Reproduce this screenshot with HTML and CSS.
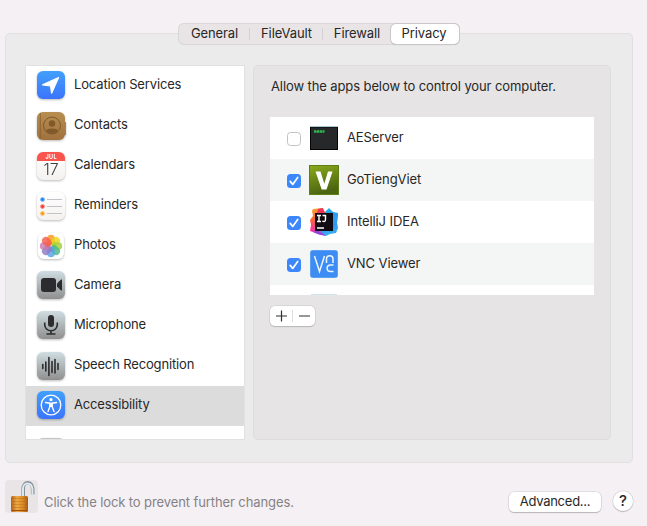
FILE: index.html
```html
<!DOCTYPE html>
<html lang="en">
<head>
<meta charset="utf-8">
<title>Security &amp; Privacy</title>
<link rel="stylesheet" href="styles.css">
</head>
<body>
<svg class="defs" width="0" height="0" aria-hidden="true">
  <defs>
    <linearGradient id="blue" x2="0" y2="1"><stop stop-color="#42a0fb"/><stop offset="1" stop-color="#3b74fb"/></linearGradient>
    <linearGradient id="brown" x2="0" y2="1"><stop stop-color="#b78e50"/><stop offset="1" stop-color="#a0713e"/></linearGradient>
    <linearGradient id="gray" x2="0" y2="1"><stop stop-color="#cfdde2"/><stop offset="1" stop-color="#908f8e"/></linearGradient>
    <linearGradient id="paper" x2="0" y2="1"><stop stop-color="#fff"/><stop offset="1" stop-color="#f4f2f0"/></linearGradient>
    <linearGradient id="green" x2="0.3" y2="1"><stop stop-color="#8aaa1c"/><stop offset="1" stop-color="#4b6410"/></linearGradient>
    <linearGradient id="gold" x2="1" y2="0"><stop stop-color="#b5611b"/><stop offset=".35" stop-color="#f0aa43"/><stop offset=".7" stop-color="#dc8a25"/><stop offset="1" stop-color="#a85a12"/></linearGradient>
    <linearGradient id="warm" x2=".3" y2="1"><stop stop-color="#fbb42c"/><stop offset=".4" stop-color="#fb6a36"/><stop offset=".75" stop-color="#f7379b"/><stop offset="1" stop-color="#b43fd0"/></linearGradient>
    <linearGradient id="cool" x2=".2" y2="1"><stop stop-color="#25c3ee"/><stop offset=".5" stop-color="#2384ee"/><stop offset="1" stop-color="#3aaef2"/></linearGradient>
  </defs>
</svg>
<main class="window">
  <section class="panel">
    <nav class="tabs">
      <span class="tab general">General</span>
      <span class="tab filevault">FileVault</span>
      <span class="tab firewall">Firewall</span>
      <span class="tab privacy active">Privacy</span>
    </nav>
    <div class="columns">
      <ul class="services">
        <li><svg class="icon" viewBox="0 0 28 28"><rect width="28" height="28" rx="6" fill="url(#blue)"/><path d="M5.600 13.800 21.600 6.500 14.600 22.200 13.500 15Z" fill="#fff" stroke="#fff" stroke-width="1.200" stroke-linejoin="round"/></svg><span>Location Services</span></li>
        <li class="low"><svg class="icon" viewBox="0 0 28 28"><path d="M27 10h2v5h-2z" fill="#3c9cdd"/><path d="M27 15h2v4h-2z" fill="#ef6a29"/><path d="M27 19h2v4h-2z" fill="#45b552"/><rect width="28" height="28" rx="6" fill="url(#brown)"/><path d="M3.300 1v26" stroke="#85602e" stroke-width=".8"/><circle cx="15" cy="13.600" r="8.500" fill="none" stroke="#80592a"/><circle cx="15" cy="11.500" r="3.200" fill="#80592a"/><path d="M9 19c1-3.200 11-3.200 12 0-3 3.500-9 3.500-12 0Z" fill="#80592a"/></svg><span>Contacts</span></li>
        <li class="low"><svg class="icon" viewBox="0 0 28 28"><rect width="28" height="28" rx="6" fill="url(#paper)"/><path d="M0 9V6a6 6 0 0 1 6-6h16a6 6 0 0 1 6 6v3Z" fill="#f9544d"/><text class="cal-month" x="14.200" y="7.100">JUL</text><text class="cal-day" x="14" y="23">17</text></svg><span>Calendars</span></li>
        <li class="low"><svg class="icon" viewBox="0 0 28 28"><rect width="28" height="28" rx="6" fill="url(#paper)"/><path d="M10 7.500h15M10 14.500h15M10 21.500h15" stroke="#c3c2c8"/><g stroke-width="1"><circle cx="5.500" cy="7.500" r="2" fill="#2482fc" stroke="#8cbcfa"/><circle cx="5.500" cy="14.500" r="2" fill="#f53d38" stroke="#f99b96"/><circle cx="5.500" cy="21.500" r="2" fill="#fc9b13" stroke="#fbcb82"/></g></svg><span>Reminders</span></li>
        <li class="low"><svg class="icon" viewBox="0 0 28 28"><rect x="1" y="1" width="26" height="26" rx="6" fill="#fff"/><g class="petals" transform="translate(14 14)"><rect x="-3.800" y="-11.200" width="7.600" height="10.600" rx="3.800" fill="#fb9a18"/><rect x="-3.800" y="-11.200" width="7.600" height="10.600" rx="3.800" fill="#ead51b" transform="rotate(45)"/><rect x="-3.800" y="-11.200" width="7.600" height="10.600" rx="3.800" fill="#a3cf39" transform="rotate(90)"/><rect x="-3.800" y="-11.200" width="7.600" height="10.600" rx="3.800" fill="#49b982" transform="rotate(135)"/><rect x="-3.800" y="-11.200" width="7.600" height="10.600" rx="3.800" fill="#55a4e4" transform="rotate(180)"/><rect x="-3.800" y="-11.200" width="7.600" height="10.600" rx="3.800" fill="#8b79c5" transform="rotate(225)"/><rect x="-3.800" y="-11.200" width="7.600" height="10.600" rx="3.800" fill="#c979b0" transform="rotate(270)"/><rect x="-3.800" y="-11.200" width="7.600" height="10.600" rx="3.800" fill="#f65b48" transform="rotate(315)"/></g></svg><span>Photos</span></li>
        <li><svg class="icon" viewBox="0 0 28 28"><rect width="28" height="28" rx="6" fill="url(#gray)"/><rect x="4" y="7" width="15" height="14" rx="3" fill="#2c2c2e"/><path d="M20 12.500 24 8.500h1v11h-1l-4-4Z" fill="#2c2c2e"/></svg><span>Camera</span></li>
        <li><svg class="icon" viewBox="0 0 28 28"><rect width="28" height="28" rx="6" fill="url(#gray)"/><rect x="11" y="4" width="6" height="12" rx="3" fill="#2c2c2e"/><path d="M7.700 11.500v2a6.300 6.300 0 0 0 12.600 0v-2M14 19.500v3.500M9.500 23h9" fill="none" stroke="#2c2c2e" stroke-width="1.600"/></svg><span>Microphone</span></li>
        <li class="low"><svg class="icon" viewBox="0 0 28 28"><rect width="28" height="28" rx="6" fill="url(#gray)"/><path d="M5.800 12.500v4M8.800 10v9M11.900 5.500v18M15 9.500v11M18 7.500v13.500M21 11.500v6" stroke="#2c2c2e" stroke-width="1.600" stroke-linecap="round"/></svg><span>Speech Recognition</span></li>
        <li class="selected"><svg class="icon" viewBox="0 0 28 28"><rect width="28" height="28" rx="6" fill="url(#blue)"/><circle cx="14" cy="14" r="9.800" fill="none" stroke="#fff" stroke-width="1.300"/><circle cx="14" cy="8.700" r="1.600" fill="#fff"/><path d="M8.500 11.500 13 12.200v3l-2 5.300M19.500 11.500 15 12.200v3l2 5.300" fill="none" stroke="#fff" stroke-width="1.400" stroke-linecap="round"/><path d="M12.300 11.900h3.400v4h-3.400z" fill="#fff"/></svg><span>Accessibility</span></li>
        <li class="partial"><svg class="icon" viewBox="0 0 28 28"><rect width="28" height="28" rx="6" fill="#c5c5c5"/></svg></li>
      </ul>
      <section class="detail">
        <p>Allow the apps below to control your computer.</p>
        <ul class="apps">
          <li><i class="check"></i><svg class="app-icon" viewBox="0 0 30 30"><rect x="1.500" y="4" width="27" height="22.500" fill="#272829" stroke="#050505"/><path d="M1 3.500h28" stroke="#a9c7d5"/><path d="M5 8.500h10.500" stroke="#2fb84f" stroke-width="2.400" stroke-dasharray="2.400 .4"/></svg><span>AEServer</span></li>
          <li><i class="check on"><svg viewBox="0 0 14 14"><path d="m3.200 7.400 2.500 3 5-7"/></svg></i><svg class="app-icon" viewBox="0 0 30 30"><rect x=".5" y=".5" width="29" height="29" fill="url(#green)" stroke="#617d15"/><path d="M6.500 6.500h5l3.800 12.200 3.700-12.200h4.500L17.500 24.500h-4.800Z" fill="#fff"/></svg><span>GoTiengViet</span></li>
          <li><i class="check on"><svg viewBox="0 0 14 14"><path d="m3.200 7.400 2.500 3 5-7"/></svg></i><svg class="app-icon" viewBox="0 0 30 30"><path d="M16 5 20 1l4 4 5 1-1 10 1 5-2 5-6 1-4 2-6-4Z" fill="url(#cool)"/><path d="m22 6 7 0-1 9-4 3Z" fill="#2f9df0"/><path d="m4 2 9-1 4 5-6 18 6 5-8-2-8-3 1-6-1-5 3-4-1-5Z" fill="url(#warm)"/><path d="m9 2 5-1 2 6H8Z" fill="#ea3560"/><path d="m7 23 10 6-7-1.500-5-2Z" fill="#8c48dc"/><path d="M6 6h18v18H6z" fill="#110c13"/><path d="M8 8.500h4M10 8.500v6M8 14.500h4M13.500 8.500h3v4.200c0 2-1.500 2-3.200 1.500M8 21h7" fill="none" stroke="#fff" stroke-width="1.400"/></svg><span>IntelliJ IDEA</span></li>
          <li><i class="check on"><svg viewBox="0 0 14 14"><path d="m3.200 7.400 2.500 3 5-7"/></svg></i><svg class="app-icon" viewBox="0 0 30 30"><rect x="1.500" y="1.500" width="27" height="27" rx="2" fill="#3c8cf3" stroke="#5da0f1"/><path d="m5.500 7 5 15.500L15.500 7M17.500 14V10c0-4.500 6.500-4.500 6.500 0v4M24.500 16h-3c-4.500 0-4.500 6.500 0 6.500h3" fill="none" stroke="#e9f4ff" stroke-width="1.500"/></svg><span>VNC Viewer</span></li>
          <li class="next"><i></i></li>
        </ul>
        <div class="add-remove"><svg viewBox="0 0 46 20"><path d="M6 10h11M11.500 4.500v11M29 10h11" stroke="#303030" stroke-width="1.200"/><path d="M22.500 4v12" stroke="#ddd"/></svg></div>
      </section>
    </div>
  </section>
  <footer>
    <div class="lock"><svg viewBox="0 0 33 33"><path d="M18.200 17V8.500c0-8 9-8 9.500 0V14" fill="none" stroke="#84929b" stroke-width="3.600" transform="translate(0 .3)"/><path d="M18 17V8.500c0-7 8.500-7 9.400 0V14" fill="none" stroke="#e1ebf0" stroke-width="1.900" transform="translate(0 .3)"/><rect x="6" y="16" width="17" height="16" rx="1.500" fill="url(#gold)"/><path d="M6 18.500h17M6 21.500h17M6 24.500h17M6 27.500h17" stroke="#a76517" stroke-width=".4"/><path d="M6.500 30.500h16" stroke="#985113"/></svg></div>
    <span class="lock-text">Click the lock to prevent further changes.</span>
    <button class="advanced">Advanced...</button>
    <button class="help">?</button>
  </footer>
</main>
</body>
</html>
```
FILE: styles.css
```css
* { box-sizing: border-box; }
body { margin: 0; background: #f5f0f4; color: #272727; font: 13px/16px Inter, "Liberation Sans", sans-serif; letter-spacing: -.1px; }
ul, p { margin: 0; padding: 0; list-style: none; }
.defs { display: block; height: 0; }
.window { width: 647px; height: 526px; padding: 33px 14px 0 5px; overflow: hidden; }
.panel { height: 430px; border: 1px solid #e2dfe2; border-radius: 5px; background: #ecebec; }
.tabs { display: flex; width: 282px; height: 22px; margin: -11px 0 0 172px; border-radius: 6px; background: #e9e5e7; box-shadow: inset 0 0 0 1px #dad7da; }
.tab { display: flex; align-items: center; justify-content: center; position: relative; padding-bottom: 2px; }
.general { width: 72px; padding-left: 1px; }
.filevault { width: 73px; }
.firewall { width: 67px; padding-left: 1px; }
.general::after, .filevault::after { content: ""; position: absolute; right: 0; top: 5px; width: 1px; height: 12px; background: #d4d1d4; }
.active { width: 68px; height: 20px; margin: 1px 1px 0; padding: 0 2px 2px 0; border-radius: 5px; background: #fff; box-shadow: 0 0 0 1px #c9c7c9, 0 1px 1px #aaa; }
.columns { display: flex; gap: 8px; padding: 20px 0 0 19px; }
.services { width: 220px; height: 375px; border: 1px solid #e2e1e2; background: #fff; overflow: hidden; }
.services li { display: flex; height: 40px; padding: 5px 0 0 11px; gap: 9px; }
.services li span { padding-top: 5px; letter-spacing: -.15px; }
.services .low { padding-top: 6px; }
.services .low span { padding-top: 4px; }
.services .selected { background: #dcdcdc; }
.services .partial { padding-top: 12px; }
.icon { width: 28px; height: 28px; flex: none; overflow: visible; filter: drop-shadow(0 1px 1px #0004); }
.cal-month { fill: #fff; font-size: 5.500px; font-weight: 700; text-anchor: middle; letter-spacing: .3px; }
.cal-day { fill: #414141; font-size: 16px; font-weight: 300; text-anchor: middle; }
.petals rect { opacity: .82; }
.detail { width: 358px; height: 375px; padding: 12px 0 0 16px; border: 1px solid #dedcde; border-radius: 5px; background: #e6e4e5; }
.detail p { padding-left: 1px; }
.apps { width: 324px; height: 178px; margin-top: 23px; background: #fff; overflow: hidden; }
.apps li { display: flex; height: 42px; padding: 6px 0 0 17px; }
.apps li:nth-child(even) { background: #f4f5f5; }
.apps li > span { margin: 6px 0 0 8px; }
.check { width: 14px; height: 14px; margin: 9px 8px 0 0; border: 1px solid #c2c2c2; border-radius: 3.500px; background: #fff; }
.check.on { border: 0; background: #3c87fc; }
.check svg { display: block; width: 14px; height: 14px; fill: none; stroke: #fff; stroke-width: 1.700; stroke-linecap: round; stroke-linejoin: round; }
.app-icon { width: 30px; height: 30px; flex: none; }
.apps .next { padding: 9px 0 0 41px; }
.next i { width: 26px; height: 2px; background: #cfe5ec; }
.add-remove { width: 45px; height: 20px; margin-top: 11px; border-radius: 5px; background: #fff; box-shadow: 0 0 0 .5px #c7c5c7, 0 1px 1px #aaa8aa; }
.add-remove svg { display: block; width: 46px; height: 20px; }
footer { display: flex; padding-top: 17px; }
.lock { width: 33px; height: 33px; border-radius: 4px; background: #e9e5e7; }
.lock svg { display: block; width: 33px; height: 33px; }
.lock-text { width: 463px; margin: 14px 0 0 6px; color: #858285; }
button { padding: 0; border: 0; background: #fff; color: #272727; font: inherit; box-shadow: 0 0 0 .5px #cbc8cb, 0 1px 1px #aaa8aa; }
.advanced { width: 92px; height: 20px; margin: 12px 0 0 2px; padding-bottom: 2px; border-radius: 5px; letter-spacing: -.25px; }
.help { width: 20px; height: 20px; margin: 11px 0 0 12px; border-radius: 50%; font-size: 15px; font-weight: 500; }
```
